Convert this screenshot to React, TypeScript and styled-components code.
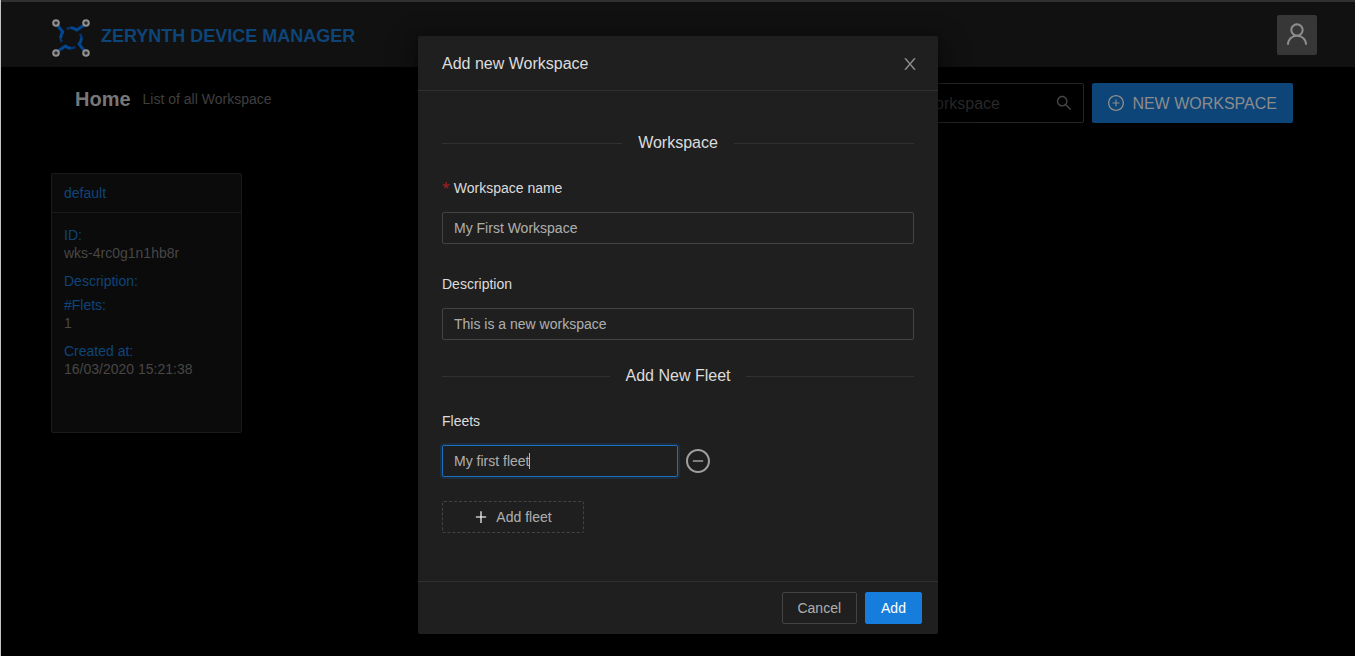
import React from "react";
import styled, { createGlobalStyle } from "styled-components";
import {
  AiOutlineMinusCircle,
  AiOutlinePlusCircle,
  AiOutlineSearch,
  AiOutlineUser,
} from "react-icons/ai";

const GlobalStyle = createGlobalStyle`
  *, *::before, *::after { box-sizing: border-box; }
  html, body { margin: 0; padding: 0; background: #000; }
  body {
    font-family: "Liberation Sans", Arial, sans-serif;
    font-size: 14px;
    line-height: 22px;
    overflow: hidden;
  }
  input, button { font-family: inherit; }
  svg { display: block; flex: none; }
`;

const Page = styled.div`
  position: relative;
  height: 656px;
  background: #000;
  border-left: 1px solid #c4c4c4;
`;

const TopBar = styled.header`
  display: flex;
  align-items: flex-start;
  justify-content: space-between;
  height: 67px;
  padding: 13px 38px 0 50px;
  background: #111;
  border-top: 2px solid #303030;
`;

const Brand = styled.div`
  display: flex;
  align-items: center;
  gap: 10px;
  padding-top: 3px;
`;

const BrandName = styled.h1`
  margin: 0;
  padding-bottom: 4px;
  font-size: 18px;
  line-height: 24px;
  font-weight: 700;
  color: #0d4579;
`;

const Avatar = styled.div`
  display: flex;
  justify-content: center;
  width: 40px;
  height: 40px;
  padding-top: 7px;
  border-radius: 2px;
  background: #373737;
  color: #8c8c8c;
`;

const PageHeader = styled.section`
  display: flex;
  justify-content: space-between;
  align-items: center;
  height: 40px;
  margin: 16px 62px 0 74px;
`;

const Heading = styled.div`
  display: flex;
  align-items: center;
  gap: 12px;
  padding-bottom: 8px;
`;

const Title = styled.h2`
  margin: 0;
  font-size: 20px;
  line-height: 32px;
  color: #777;
`;

const Subtitle = styled.span`
  color: #3f3f3f;
`;

const Actions = styled.div`
  display: flex;
  gap: 8px;
`;

const SearchBox = styled.div`
  display: flex;
  align-items: center;
  justify-content: space-between;
  width: 228px;
  height: 40px;
  padding: 0 11px;
  border: 1px solid #252525;
  border-radius: 2px;
  font-size: 16px;
  color: #292929;

  span { padding-top: 2px; }
  svg { color: #464646; }
`;

const NewButton = styled.button`
  display: flex;
  align-items: center;
  gap: 8px;
  height: 40px;
  padding: 0 16px;
  border: 0;
  border-radius: 2px;
  background: #0d4579;
  color: #8c8c8c;
  font-size: 16px;

  span { padding-top: 2px; }
`;

const Card = styled.article`
  width: 191px;
  height: 260px;
  margin: 50px 0 0 50px;
  border: 1px solid #1a1a1a;
  border-radius: 2px;
  background: #0b0b0b;
`;

const CardTitle = styled.div`
  height: 39px;
  padding: 0 12px;
  border-bottom: 1px solid #1a1a1a;
  line-height: 38px;
  color: #0d4579;
`;

const CardBody = styled.dl`
  margin: 0;
  padding: 13px 12px;
  line-height: 18px;
`;

const Entry = styled.div<{ $empty?: boolean }>`
  margin-bottom: ${(p) => (p.$empty ? 6 : 10)}px;
`;

const Term = styled.dt`
  color: #0d4579;
`;

const Value = styled.dd`
  margin: 0;
  color: #474747;
`;

const Dialog = styled.div`
  position: absolute;
  top: 36px;
  left: 417px;
  width: 520px;
  border-radius: 2px;
  background: #1f1f1f;
  box-shadow:
    0 3px 6px -4px rgba(0, 0, 0, 0.48),
    0 6px 16px 0 rgba(0, 0, 0, 0.32),
    0 9px 28px 8px rgba(0, 0, 0, 0.2);
`;

const DialogHeader = styled.div`
  display: flex;
  align-items: center;
  justify-content: space-between;
  height: 55px;
  padding: 2px 20px 0 24px;
  border-bottom: 1px solid #303030;
  color: rgba(255, 255, 255, 0.85);
  font-size: 16px;

  svg { color: rgba(255, 255, 255, 0.5); }
`;

const DialogBody = styled.form`
  height: 490px;
  padding: 40px 24px 24px;
`;

const Divider = styled.div`
  display: flex;
  gap: 16px;
  height: 25px;
  margin-bottom: 16px;
  color: rgba(255, 255, 255, 0.85);
  font-size: 16px;
  line-height: 23px;

  &::before, &::after {
    content: "";
    flex: 1;
    height: 1px;
    margin-top: 12px;
    background: #303030;
  }
`;

const Field = styled.div`
  margin-bottom: 24px;
`;

const Label = styled.label`
  display: flex;
  gap: 4px;
  height: 32px;
  margin-bottom: 8px;
  line-height: 32px;
  color: rgba(255, 255, 255, 0.85);
`;

const Required = styled.span`
  color: #a61d24;
  font-family: "Noto Sans", sans-serif;
`;

const Input = styled.div<{ $focused?: boolean }>`
  display: flex;
  align-items: center;
  width: ${(p) => (p.$focused ? "236px" : "100%")};
  height: 32px;
  padding: 0 11px;
  border: 1px solid ${(p) => (p.$focused ? "#1a6fc0" : "#434343")};
  border-radius: 2px;
  box-shadow: ${(p) => (p.$focused ? "0 0 0 2px rgba(23, 125, 220, 0.15)" : "none")};
  color: rgba(255, 255, 255, 0.65);
`;

const Caret = styled.span`
  width: 1px;
  height: 16px;
  background: #b4b4b4;
`;

const FleetRow = styled.div`
  display: flex;
  align-items: center;
  gap: 8px;
  color: #9f9f9f;
`;

const AddFleet = styled.button`
  display: flex;
  align-items: center;
  justify-content: center;
  gap: 8px;
  width: 142px;
  height: 32px;
  border: 1px dashed #434343;
  border-radius: 2px;
  background: transparent;
  color: rgba(255, 255, 255, 0.65);
  font-size: 14px;

  svg { color: rgba(255, 255, 255, 0.75); }
`;

const DialogFooter = styled.div`
  display: flex;
  justify-content: flex-end;
  gap: 8px;
  height: 53px;
  padding: 10px 16px;
  border-top: 1px solid #303030;
`;

const Button = styled.button<{ $primary?: boolean }>`
  width: ${(p) => (p.$primary ? 57 : 75)}px;
  height: 32px;
  padding: 0 ${(p) => (p.$primary ? 0 : 0.5)}px 0 0;
  border: 1px solid ${(p) => (p.$primary ? "#177ddc" : "#434343")};
  border-radius: 2px;
  background: ${(p) => (p.$primary ? "#177ddc" : "transparent")};
  color: ${(p) => (p.$primary ? "#fff" : "rgba(255, 255, 255, 0.65)")};
  font-size: 14px;
`;

// Trims the empty margin of the icon set's 1024-unit canvas.
const TRIMMED = "64 64 896 896";

const CloseIcon = () => (
  <svg width="16" height="16" viewBox={TRIMMED} fill="currentColor">
    <path d="M563.8 512l262.5-312.9c4.4-5.2.7-13.1-6.1-13.1h-79.8c-4.7 0-9.2 2.1-12.3 5.7L511.6 449.8 295.1 191.7c-3-3.6-7.5-5.7-12.3-5.7H203c-6.8 0-10.5 7.9-6.1 13.1L459.4 512 196.9 824.9A7.95 7.95 0 0 0 203 838h79.8c4.7 0 9.2-2.1 12.3-5.7l216.5-258.1 216.5 258.1c3 3.6 7.5 5.7 12.3 5.7h79.8c6.8 0 10.5-7.9 6.1-13.1L563.8 512z" />
  </svg>
);

const PlusIcon = () => (
  <svg width="14" height="14" viewBox={TRIMMED} fill="currentColor">
    <rect x="460" y="136" width="104" height="752" rx="8" />
    <rect x="184" y="460" width="656" height="104" rx="8" />
  </svg>
);

const Logo = () => (
  <svg width="40" height="40" viewBox="0 0 40 40" fill="none">
    <g stroke="#02468f" strokeWidth="3" strokeLinejoin="round">
      <path d="M6.5 7.3 L11.8 14 Q9.6 16.5 9.6 20" />
      <path d="M33 7.3 L25.7 12 Q23 9.8 19.7 9.7" />
      <path d="M33.2 32.7 L28 26 Q30.4 23.5 30.4 20" />
      <path d="M7.3 32.7 L14.5 28 Q17 30.2 20.3 30.3" />
    </g>
    <g stroke="#02418a" strokeWidth="2.6" opacity="0.8">
      <path d="M9.6 20 Q9.7 22 10.8 24" />
      <path d="M19.7 9.7 Q17.7 9.8 15.7 11" />
      <path d="M30.4 20 Q30.3 18 29.2 16" />
      <path d="M20.3 30.3 Q22.3 30.2 24.3 29" />
    </g>
    <g stroke="#929292" strokeWidth="2" fill="#2a2a2a">
      <circle cx="5" cy="5" r="2.8" />
      <circle cx="35" cy="5" r="2.8" />
      <circle cx="5" cy="35" r="2.8" />
      <circle cx="35" cy="35" r="2.8" />
    </g>
  </svg>
);

const details = [
  { term: "ID:", value: "wks-4rc0g1n1hb8r" },
  { term: "Description:", value: "" },
  { term: "#Flets:", value: "1" },
  { term: "Created at:", value: "16/03/2020 15:21:38" },
];

export default function App() {
  return (
    <Page>
      <GlobalStyle />
      <TopBar>
        <Brand>
          <Logo />
          <BrandName>ZERYNTH DEVICE MANAGER</BrandName>
        </Brand>
        <Avatar>
          <AiOutlineUser size={24} viewBox={TRIMMED} />
        </Avatar>
      </TopBar>
      <PageHeader>
        <Heading>
          <Title>Home</Title>
          <Subtitle>List of all Workspace</Subtitle>
        </Heading>
        <Actions>
          <SearchBox>
            <span>Search workspace</span>
            <AiOutlineSearch size={16} viewBox={TRIMMED} />
          </SearchBox>
          <NewButton>
            <AiOutlinePlusCircle size={16} viewBox={TRIMMED} />
            <span>NEW WORKSPACE</span>
          </NewButton>
        </Actions>
      </PageHeader>
      <Card>
        <CardTitle>default</CardTitle>
        <CardBody>
          {details.map((d) => (
            <Entry key={d.term} $empty={!d.value}>
              <Term>{d.term}</Term>
              {d.value && <Value>{d.value}</Value>}
            </Entry>
          ))}
        </CardBody>
      </Card>
      <Dialog role="dialog">
        <DialogHeader>
          Add new Workspace
          <CloseIcon />
        </DialogHeader>
        <DialogBody>
          <Divider>Workspace</Divider>
          <Field>
            <Label>
              <Required>*</Required>Workspace name
            </Label>
            <Input>My First Workspace</Input>
          </Field>
          <Field>
            <Label>Description</Label>
            <Input>This is a new workspace</Input>
          </Field>
          <Divider>Add New Fleet</Divider>
          <Field>
            <Label>Fleets</Label>
            <FleetRow>
              <Input $focused>
                My first fleet
                <Caret />
              </Input>
              <AiOutlineMinusCircle size={24} viewBox={TRIMMED} />
            </FleetRow>
          </Field>
          <AddFleet type="button">
            <PlusIcon />
            Add fleet
          </AddFleet>
        </DialogBody>
        <DialogFooter>
          <Button>Cancel</Button>
          <Button $primary>Add</Button>
        </DialogFooter>
      </Dialog>
    </Page>
  );
}
